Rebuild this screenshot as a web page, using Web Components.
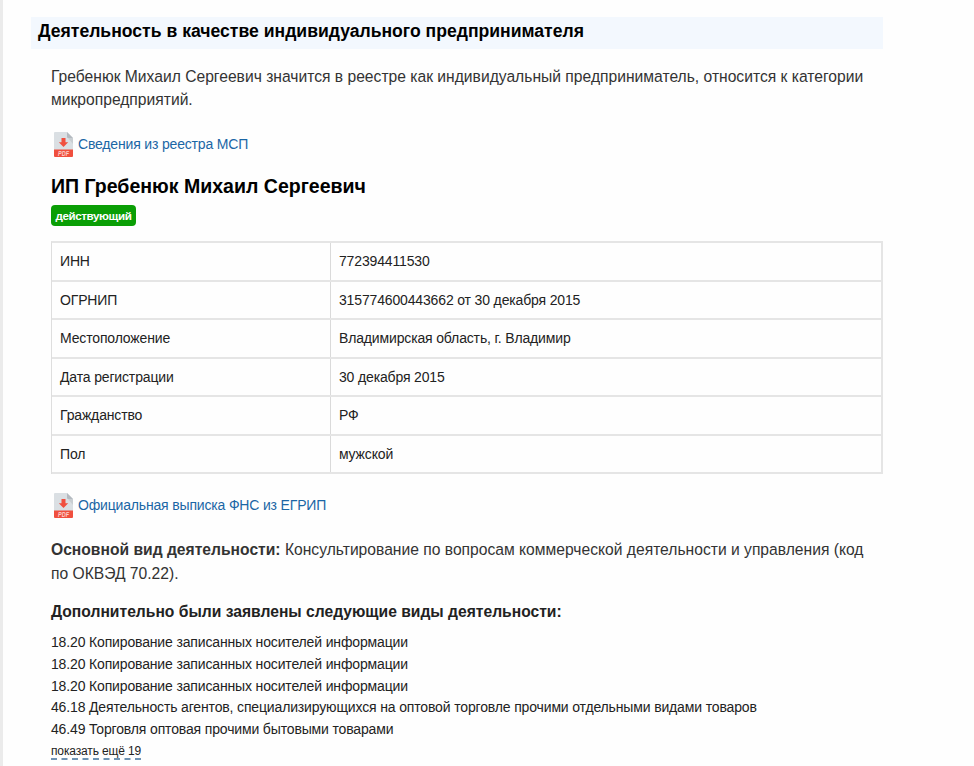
<!DOCTYPE html>
<html lang="ru">
<head>
<meta charset="utf-8">
<title>Деятельность в качестве индивидуального предпринимателя</title>
<style>
    body {
        margin: 0;
        background: #fefefe;
        color: #333;
        font-family: "Liberation Sans", Arial, sans-serif;
    }
</style>
</head>
<body>
<ip-report>
    <span slot="title">Деятельность в качестве индивидуального предпринимателя</span>

    <ip-text>Гребенюк Михаил Сергеевич значится в реестре как индивидуальный предприниматель, относится к категории<br>микропредприятий.</ip-text>
    <pdf-link style="margin-top: 19px">Сведения из реестра МСП</pdf-link>
    <ip-name status="действующий">ИП Гребенюк Михаил Сергеевич</ip-name>

    <ip-table>
        <ip-row label="ИНН">772394411530</ip-row>
        <ip-row label="ОГРНИП" tight>315774600443662 от 30 декабря 2015</ip-row>
        <ip-row label="Местоположение">Владимирская область, г. Владимир</ip-row>
        <ip-row label="Дата регистрации" tight>30 декабря 2015</ip-row>
        <ip-row label="Гражданство">РФ</ip-row>
        <ip-row label="Пол" tight>мужской</ip-row>
    </ip-table>

    <pdf-link style="margin-top: 18px">Официальная выписка ФНС из ЕГРИП</pdf-link>
    <ip-text style="margin-top: 19.5px"><b>Основной вид деятельности:</b> Консультирование по вопросам коммерческой деятельности и управления (код<br>по ОКВЭД 70.22).</ip-text>

    <ip-activities more="показать ещё 19">
        <span slot="title">Дополнительно были заявлены следующие виды деятельности:</span>
        <div>18.20 Копирование записанных носителей информации</div>
        <div>18.20 Копирование записанных носителей информации</div>
        <div>18.20 Копирование записанных носителей информации</div>
        <div>46.18 Деятельность агентов, специализирующихся на оптовой торговле прочими отдельными видами товаров</div>
        <div>46.49 Торговля оптовая прочими бытовыми товарами</div>
    </ip-activities>
</ip-report>

<script>
class IpReport extends HTMLElement {
    constructor() {
        super();
        this.attachShadow({ mode: 'open' });
        this.shadowRoot.innerHTML = `
            <style>
                :host {
                    display: block;
                    box-sizing: border-box;
                    height: 766px;
                    overflow: hidden;
                    border-left: 3px solid #ebebeb;
                    padding: 17px 91.5px 0 28.4px;
                }

                h2 {
                    margin: 0;
                    padding-left: 6.6px;
                    background: #f3f8fe;
                    color: #000;
                    font-size: 17.6px;
                    line-height: 28px;
                    height: 32.4px;
                    white-space: nowrap;
                }

                main {
                    padding: 15.6px 0 0 19.6px;
                }
            </style>
            <h2><slot name="title"></slot></h2>
            <main><slot></slot></main>
        `;
    }
}

class IpText extends HTMLElement {
    constructor() {
        super();
        this.attachShadow({ mode: 'open' });
        this.shadowRoot.innerHTML = `
            <style>
                :host {
                    display: block;
                    font-size: 15.65px;
                    line-height: 23.5px;
                    white-space: nowrap;
                }
            </style>
            <slot></slot>
        `;
    }
}

class PdfLink extends HTMLElement {
    constructor() {
        super();
        this.attachShadow({ mode: 'open' });
        this.shadowRoot.innerHTML = `
            <style>
                :host {
                    display: flex;
                    align-items: center;
                    height: 27px;
                    padding-left: 3px;
                    color: #1b66a5;
                    font-size: 14px;
                    letter-spacing: -0.17px;
                    line-height: 18px;
                }

                svg {
                    flex: none;
                    margin-right: 5px;
                }

                span {
                    padding-bottom: 1px;
                }

                text {
                    font: italic bold 7px "Liberation Sans", sans-serif;
                    letter-spacing: 0;
                }
            </style>
            <svg width="19" height="25" viewBox="0 0 19 25">
                <path fill="#dadfe3" d="M1 0h12l6 6v12H0V1q0-1 1-1z"/>
                <path fill="#b4bac0" d="M13 0l6 6h-5q-1 0-1-1z"/>
                <path fill="#c9ced2" d="M14 6h5v6z"/>
                <path fill="#f04f3e" d="M7.5 6h4v4.2h2.7L9.5 15 4.8 10.2h2.7z"/>
                <path fill="#f04f3e" d="M0 17.5h19V24q0 1-1 1H1q-1 0-1-1z"/>
                <text x="4" y="23.7" fill="#fbd0ca" textLength="11" lengthAdjust="spacingAndGlyphs">PDF</text>
            </svg>
            <span><slot></slot></span>
        `;
    }
}

class IpName extends HTMLElement {
    constructor() {
        super();
        this.attachShadow({ mode: 'open' });
        this.shadowRoot.innerHTML = `
            <style>
                :host {
                    display: block;
                    margin-top: 16px;
                }

                h3 {
                    margin: 0 0 7px;
                    color: #000;
                    font-size: 19.55px;
                    line-height: 24px;
                    white-space: nowrap;
                }

                #status {
                    display: flex;
                    align-items: center;
                    justify-content: center;
                    width: 85px;
                    height: 21px;
                    border-radius: 4px;
                    background: #0a9e05;
                    color: #fff;
                    font-size: 11.6px;
                    letter-spacing: -0.4px;
                    font-weight: bold;
                }
            </style>
            <h3><slot></slot></h3>
            <div id="status"></div>
        `;
        this.shadowRoot.querySelector('#status').textContent = this.getAttribute('status');
    }
}

class IpTable extends HTMLElement {
    constructor() {
        super();
        this.attachShadow({ mode: 'open' });
        this.shadowRoot.innerHTML = `
            <style>
                :host {
                    display: block;
                    margin-top: 15px;
                    border: solid #e5e5e5;
                    border-width: 2px 2px 0 1px;
                    border-left-color: #dedede;
                }
            </style>
            <slot></slot>
        `;
    }
}

class IpRow extends HTMLElement {
    constructor() {
        super();
        this.attachShadow({ mode: 'open' });
        this.shadowRoot.innerHTML = `
            <style>
                :host {
                    display: grid;
                    grid-template-columns: 279px 1fr;
                    box-sizing: border-box;
                    height: 39px;
                    border-bottom: 2px solid #e5e5e5;
                    color: #222;
                    font-size: 14px;
                    letter-spacing: -0.15px;
                    line-height: 36px;
                }

                :host([tight]) {
                    height: 38px;
                }

                div {
                    padding-left: 8px;
                }

                #label {
                    border-right: 1px solid #dadada;
                }
            </style>
            <div id="label"></div>
            <div><slot></slot></div>
        `;
        this.shadowRoot.querySelector('#label').textContent = this.getAttribute('label');
    }
}

class IpActivities extends HTMLElement {
    constructor() {
        super();
        this.attachShadow({ mode: 'open' });
        this.shadowRoot.innerHTML = `
            <style>
                :host {
                    display: block;
                    margin-top: 15px;
                    color: #222;
                    font-size: 14px;
                    letter-spacing: -0.15px;
                    line-height: 21.6px;
                    white-space: nowrap;
                }

                h4 {
                    margin: 0 0 8px;
                    font-size: 15.65px;
                    letter-spacing: 0;
                    line-height: 24px;
                }

                #more {
                    display: inline-block;
                    margin-top: 4px;
                    border-bottom: 2px dashed #6f93b3;
                    font-size: 12px;
                    letter-spacing: -0.13px;
                    line-height: 14px;
                }
            </style>
            <h4><slot name="title"></slot></h4>
            <slot></slot>
            <span id="more"></span>
        `;
        this.shadowRoot.querySelector('#more').textContent = this.getAttribute('more');
    }
}

customElements.define('ip-report', IpReport);
customElements.define('ip-text', IpText);
customElements.define('pdf-link', PdfLink);
customElements.define('ip-name', IpName);
customElements.define('ip-table', IpTable);
customElements.define('ip-row', IpRow);
customElements.define('ip-activities', IpActivities);
</script>
</body>
</html>
